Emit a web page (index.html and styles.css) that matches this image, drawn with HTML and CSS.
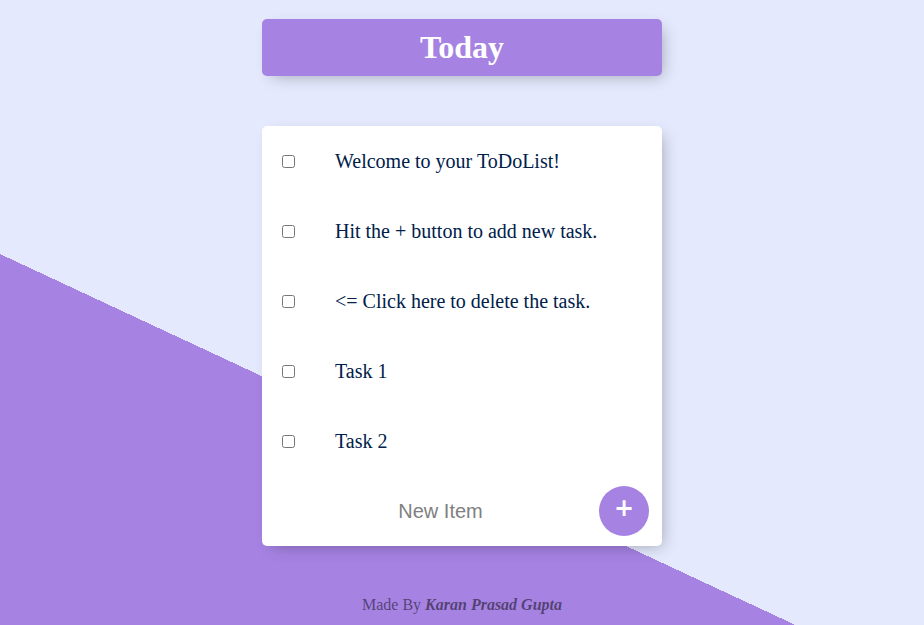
FILE: index.html
```html
<!DOCTYPE html>
<html lang="en">
<head>
<meta charset="utf-8">
<title>ToDoList</title>
<link rel="stylesheet" href="styles.css">
</head>
<body>
  <div class="heading box">
    <h1 class="title">Today</h1>
  </div>
  <div class="list box">
    <div class="item"><input type="checkbox" class="check"><p class="text">Welcome to your ToDoList!</p></div>
    <div class="item"><input type="checkbox" class="check"><p class="text">Hit the + button to add new task.</p></div>
    <div class="item"><input type="checkbox" class="check"><p class="text">&lt;= Click here to delete the task.</p></div>
    <div class="item"><input type="checkbox" class="check"><p class="text">Task 1</p></div>
    <div class="item"><input type="checkbox" class="check"><p class="text">Task 2</p></div>
    <form class="item new-form" onsubmit="return false">
      <input type="text" class="new-input" placeholder="New Item" autocomplete="off">
      <button type="submit" class="add-btn">+</button>
    </form>
  </div>
  <footer class="footer">Made By <b><i>Karan Prasad Gupta</i></b></footer>
</body>
</html>
```

FILE: styles.css
```css
html {
  background-color: #E4E9FD;
  background-image: linear-gradient(25deg, #A683E3 50%, #E4E9FD 50%);
  background-size: 100% 939px;
  background-repeat: no-repeat;
  height: 100%;
  overflow: hidden;
  font-family: "Liberation Serif", "Times New Roman", serif;
}

body {
  margin: 0;
  padding-top: 19px;
}

.box {
  width: 400px;
  margin: 0 auto;
  background: #fff;
  border-radius: 5px;
  box-shadow: 5px 5px 15px -5px rgba(0, 0, 0, 0.3);
}

.heading {
  background-color: #A683E3;
  text-align: center;
  height: 57px;
  display: flex;
  align-items: center;
  justify-content: center;
}

.title {
  margin: 0;
  color: #fff;
  font-size: 32px;
  font-weight: bold;
  line-height: 37px;
}

.list {
  margin-top: 50px;
}

.item {
  height: 70px;
  display: flex;
  align-items: center;
}

.check {
  margin: 0 0 0 20px;
  width: 13px;
  height: 13px;
  flex: none;
}

.text {
  margin: 0;
  padding: 0 20px 0 40px;
  font-size: 20px;
  color: #00204a;
  line-height: 23px;
}

.new-form {
  margin: 0;
  padding-left: 20px;
}

.new-input {
  width: 313px;
  height: 60px;
  padding: 0 2px;
  border: none;
  background: transparent;
  text-align: center;
  font-family: "Liberation Sans", Arial, sans-serif;
  font-size: 20px;
  color: #333;
  outline: none;
  flex: none;
}

.new-input::placeholder {
  color: grey;
  opacity: 1;
}

.add-btn {
  width: 50px;
  height: 50px;
  border-radius: 50%;
  border: 0;
  background-color: #A683E3;
  color: #fff;
  font-family: "DejaVu Sans", sans-serif;
  font-size: 24px;
  font-weight: bold;
  padding: 0 0 6px 0;
  line-height: 34px;
  flex: none;
}

.footer {
  margin-top: 50px;
  text-align: center;
  color: rgba(0, 0, 0, 0.5);
  font-size: 16px;
}
```
